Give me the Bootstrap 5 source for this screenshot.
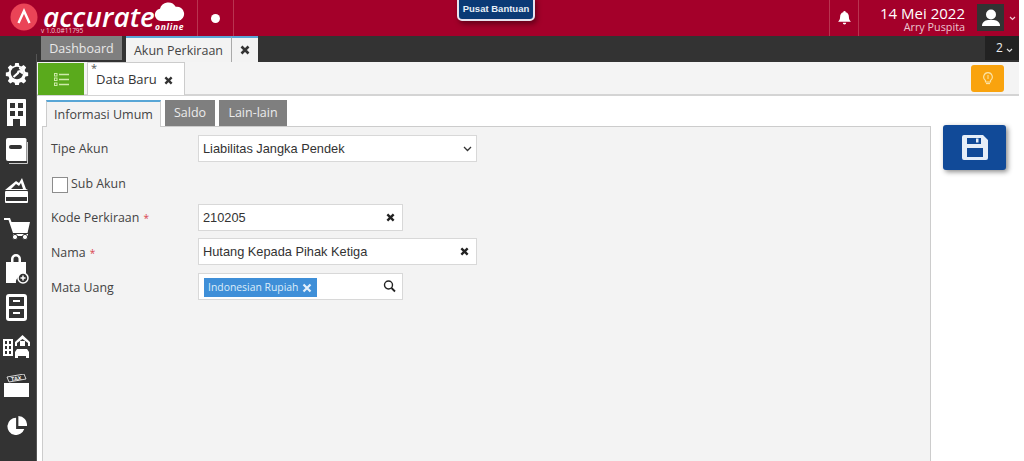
<!DOCTYPE html>
<html lang="id"><head><meta charset="utf-8"><title>Accurate</title>
<link href="https://cdn.jsdelivr.net/npm/bootstrap@5.3.0/dist/css/bootstrap.min.css" rel="stylesheet">
<style>
html,body{height:461px;overflow:hidden;background:#fff}
body{font-family:"Open Sans","Noto Sans",sans-serif;font-size:12.4px;color:#444}
.app{width:1019px;height:461px}
.topbar{height:36px;background:#a4002a;color:#fff}
.brand{width:197px;padding-left:10px}
.logo-mark{width:28px;height:28px;flex:none;margin-top:3px}
.brand-word{position:relative;width:155px;height:36px;margin-left:3px}
.word{position:absolute;left:2px;top:5px;font:italic 600 27.8px/22px "Open Sans",sans-serif;letter-spacing:.1px;color:#fff}
.ver{position:absolute;left:0;top:27px;font-size:6.5px;line-height:7px;color:#f3c6d0}
.onl{position:absolute;left:114px;top:22px;font:italic 700 8.5px/9px "Open Sans",sans-serif;letter-spacing:.7px}
.cloud{position:absolute;left:113px;top:2px;width:31px;height:20px}
.sep{width:37px;height:36px;border-left:1px solid #b93450;border-right:1px solid #b93450}
.dot{width:9px;height:9px;background:#fff;border-radius:50%}
.help-wrap{position:relative;flex:1}
.help{position:absolute;left:223px;top:-3px;width:78px;height:24px;background:#0b3a75;border:2px solid #e9e3ee;border-radius:0 0 5px 5px;color:#e9f0f8;font:700 9.5px/20px "Liberation Sans",sans-serif;text-align:center;box-shadow:2px 3px 5px rgba(60,0,15,.6)}
.bell-box{width:30px;height:36px;border-left:1px solid #b93450;border-right:1px solid #b93450}
.when{width:106px;text-align:right;margin-right:12px;font-family:"Open Sans",sans-serif}
.when-date{font-size:15px;line-height:14px;margin-top:6px;white-space:nowrap}
.when-name{font-size:10.8px;line-height:11px;color:#ecc5cf;margin-top:1px;white-space:nowrap}
.avatar{width:27px;height:27px;background:#333;margin-right:5px}
.caret-m{width:10px}
.tabstrip{height:26px;background:#333;padding-left:41px}
.mtab{height:26px;font-size:12.5px;padding:0 9px}
.mtab-off{background:#7f7f7f;color:#e9e9e9;width:81px;text-align:center;padding:0;height:24px;margin-right:4px;line-height:26px}
.mtab-on{background:#f3f3f3;color:#444;border-top:2px solid #58a6d6;width:105px;line-height:25px;padding:0;text-align:center}
.mtab-x{background:#f3f3f3;border-top:2px solid #58a6d6;width:27px;border-left:1px solid #aaa}
.count{width:34px;height:24px;background:#222;color:#eee;font-size:12px;line-height:23px;padding-left:11px}
.count-caret{margin:0 0 -4px 3px}
.lower{height:399px}
.rail{width:36px;background:#333;flex:none;border-right:1px solid #555;box-sizing:content-box;margin-top:-8.5px;position:relative}
.rail-ico{height:39.1px;padding-right:3px}
.rail-ico svg{display:block}
.main{min-width:0;background:#fff}
.subbar{height:34px;background:#f4f4f4;border-bottom:2px solid #d4d4d4}
.green{width:46px;height:32px;background:#5aaa1c;margin:1px 3px 0 1px}
.dtab{position:relative;width:98px;height:33px;background:#fff;border:1px solid #ccc;border-bottom:0;font-size:13px;line-height:33px;color:#333;padding-left:8px}
.dtab-star{position:absolute;left:3px;top:-3px;font-size:11px;line-height:16px;color:#555}
.bulb{width:33px;height:27px;background:#f9a30e;border-radius:3px;margin:3px 15px 0 0}
.pane{min-height:0;position:relative;padding:4px 0 0 5px}
.ftabs{height:27px;gap:4px;padding-left:4px}
.ftab{font-size:12.5px;line-height:26px;height:26px;text-align:center}
.ftab-on{width:115px;height:27px;background:#f3f3f3;border-top:2px solid #58a6d6;border-left:1px solid #ccc;border-right:1px solid #ccc;color:#444;position:relative;z-index:1}
.ftab-off{background:#7f7f7f;color:#ececec}
.w-saldo{width:50px}.w-lain{width:68px}
.panel-row{flex:1;min-height:0}
.panel{width:889px;background:#f3f3f3;border:1px solid #ccc;border-bottom:0;margin-top:-1px;padding-top:8px;height:336px}
.field{height:27px;padding-left:8px;color:#444;margin-bottom:7px}
.field-first{margin-bottom:0}
.field-last{margin-bottom:8px}
.lbl{width:147px;line-height:27px;font-size:12.4px}
.lbl-low{line-height:29px}
.req{color:#d9434e;font-size:10px;margin-left:1px}
.box{background:#fff;border:1px solid #d8d8d8;height:27px;font:12.8px/25px "Liberation Sans",sans-serif;color:#333;padding:0 7px 0 4px}
.w-l{width:279px}.w-s{width:205px}
.subk{height:30px;margin:12px 0 0;padding-left:9px;color:#444}
.chk{width:16px;height:16px;background:#fff;border:1px solid #8c8c8c;margin-top:3px;margin-right:3px}
.subk-t{line-height:19px;font-size:12.4px}
.chip{background:#3f8fd8;color:#dcecf9;height:19px;margin:4px 0 0 1px;padding:0 5px 0 4px;font:10.4px/19px "Open Sans",sans-serif;width:113px;white-space:nowrap}
.caret-r{margin-right:-3px}
.search-r{margin:5px -1px 0 0}
.savebtn{width:63px;height:45px;background:#114a98;border-radius:3px;margin:-2px 0 0 12px;box-shadow:2px 2px 5px rgba(0,0,0,.45)}
</style></head><body>
<div class="app d-flex flex-column">
 <div class="topbar d-flex flex-shrink-0">
  <div class="brand d-flex">
   <svg class="logo-mark" viewBox="0 0 28 28"><circle cx="14" cy="14" r="13.500" fill="#ea4457"/><path d="M8.500 20 14 8l5.500 12" fill="none" stroke="#fff" stroke-width="2.400"/></svg>
   <div class="brand-word">
    <span class="word">accurate</span>
    <span class="ver">v 1.0.0#11795</span>
    <svg class="cloud" viewBox="0 0 32 21"><path d="M7 20a6.500 6.500 0 0 1-1-12.900A9 9 0 0 1 22.500 5 7.500 7.500 0 0 1 25 20Z" fill="#fff"/></svg>
    <span class="onl">online</span>
   </div>
  </div>
  <div class="sep d-flex align-items-center justify-content-center"><span class="dot"></span></div>
  <div class="help-wrap"><div class="help">Pusat Bantuan</div></div>
  <div class="bell-box d-flex align-items-center justify-content-center">
   <svg width="13" height="14" viewBox="0 0 13 14"><path d="M6.500 0a1.200 1.200 0 0 1 1.200 1.300c2.200.5 3.200 2.300 3.200 4.700 0 2.500.8 3.500 2 4.800H.1c1.200-1.300 2-2.300 2-4.800 0-2.400 1-4.200 3.200-4.700A1.200 1.200 0 0 1 6.500 0ZM4.800 11.800h3.400a1.700 1.700 0 0 1-3.400 0Z" fill="#fff"/></svg>
  </div>
  <div class="when"><div class="when-date">14 Mei 2022</div><div class="when-name">Arry Puspita</div></div>
  <div class="avatar d-flex align-items-center justify-content-center mt-1">
   <svg width="20" height="18" viewBox="0 0 20 18"><circle cx="10" cy="5.500" r="5" fill="#fff"/><path d="M1 17c0-4 3-5.500 6-6h6c3 .5 6 2 6 6Z" fill="#fff"/></svg>
  </div>
  <div class="caret-m d-flex align-items-center"><svg width="7" height="5" viewBox="0 0 7 5"><path d="m1 1 2.500 2.500L6 1" fill="none" stroke="#f3c6d0" stroke-width="1.200"/></svg></div>
 </div>
 <div class="tabstrip d-flex flex-shrink-0">
  <div class="mtab mtab-off">Dashboard</div>
  <div class="mtab mtab-on">Akun Perkiraan</div>
  <div class="mtab-x d-flex align-items-center justify-content-center"><svg width="10" height="10" viewBox="0 0 10 10"><path d="m1.500 1.500 7 7m0-7-7 7" stroke="#333" stroke-width="2.600"/></svg></div>
  <div class="flex-grow-1"></div>
  <div class="count">2<svg class="count-caret" width="7" height="5" viewBox="0 0 7 5"><path d="m1 1 2.500 2.500L6 1" fill="none" stroke="#ddd" stroke-width="1.200"/></svg></div>
 </div>
 <div class="lower d-flex flex-grow-1">
  <div class="rail">
   <div class="rail-ico d-flex justify-content-center align-items-center"><svg width="24" height="24" viewBox="0 0 24 24"><path d="M10 1h4l.6 3 2.200.9 2.600-1.700 2.800 2.800-1.700 2.600.9 2.200 3 .6v4l-3 .6-.9 2.200 1.700 2.600-2.800 2.800-2.600-1.700-2.200.9-.6 3h-4l-.6-3-2.200-.9-2.600 1.700-2.800-2.800 1.700-2.600-.9-2.200-3-.6v-4l3-.6.9-2.200-1.700-2.600 2.800-2.800 2.600 1.700 2.200-.9Z" fill="#fff" transform="translate(1.200 1.200) scale(.9)"/><circle cx="12" cy="12" r="6.200" fill="#333"/><path d="M14 7a3.700 3.700 0 0 1 3 4.600l-2.100-1.500-1.500.5-.5 1.500L8.500 16" stroke="#fff" stroke-width="2.200" fill="none"/></svg></div>
   <div class="rail-ico d-flex justify-content-center align-items-center"><svg width="19" height="27" viewBox="0 0 19 27"><path fill-rule="evenodd" d="M1 0h17a1 1 0 0 1 1 1v26h-6v-7H6v7H0V1a1 1 0 0 1 1-1ZM3 4v5h5V4Zm8 0v5h5V4ZM3 12v5h5v-5Zm8 0v5h5v-5Z" fill="#fff"/></svg></div>
   <div class="rail-ico d-flex justify-content-center align-items-center"><svg width="22" height="26" viewBox="0 0 22 26"><path d="M2 0h17a1.500 1.500 0 0 1 1.500 1.500V23H2a2 2 0 0 1-2-2V2a2 2 0 0 1 2-2Z" fill="#fff"/><rect x="3" y="7" width="13" height="4" rx="2" fill="#333"/><path d="M21.500 4v21.500H3" fill="none" stroke="#ccc"/></svg></div>
   <div class="rail-ico d-flex justify-content-center align-items-center"><svg width="23" height="25" viewBox="0 0 23 25"><path d="M0 12 11 3l3 2 3-5 4 11 2 1H0Z" fill="#fff"/><path d="m6 11 5-5 3 2 2-3 2 6Z" fill="#333"/><rect y="13" width="23" height="12" fill="#fff" rx="1"/><rect x="1" y="19" width="21" height="4" fill="#333"/></svg></div>
   <div class="rail-ico d-flex justify-content-center align-items-center"><svg width="26" height="22" viewBox="0 0 26 22"><path d="M0 0h6l1.500 4H26l-2.500 11H9L4.500 2H0Z" fill="#fff"/><path d="M9 16h15v2H9Z" fill="#fff"/><circle cx="11" cy="19" r="2.600" fill="#fff" stroke="#333"/><circle cx="21" cy="19" r="2.600" fill="#fff" stroke="#333"/></svg></div>
   <div class="rail-ico d-flex justify-content-center align-items-center"><svg width="24" height="32" viewBox="0 0 24 32"><path d="M1 9h5V6a5 5 0 0 1 10 0v3h5v14h-3a6 6 0 0 0-7 7H1Z" fill="#fff"/><path d="M8.500 9V6a2.500 2.500 0 0 1 5 0v3Z" fill="#333"/><circle cx="18" cy="25" r="5" fill="#333" stroke="#fff" stroke-width="1.500"/><path d="M15.500 25h5M18 22.500v5" stroke="#fff" stroke-width="1.500"/></svg></div>
   <div class="rail-ico d-flex justify-content-center align-items-center"><svg width="21" height="27" viewBox="0 0 21 27"><rect width="21" height="27" rx="3" fill="#fff"/><rect x="3" y="3" width="15" height="9" fill="#333"/><rect x="3" y="15" width="15" height="9" fill="#333"/><rect x="7" y="6" width="7" height="2" fill="#fff"/><rect x="7" y="18" width="7" height="2" fill="#fff"/></svg></div>
   <div class="rail-ico d-flex justify-content-center align-items-center"><svg width="27" height="26" viewBox="0 0 27 26"><path fill-rule="evenodd" d="M0 5h10v17H0ZM2 7v3h2V7Zm4 0v3h2V7ZM2 12v3h2v-3Zm4 0v3h2v-3ZM2 17v3h2v-3Zm4 0v3h2v-3Z" fill="#fff"/><path d="m12 8 7.500-7L27 8v4h-2V9l-5.500-4L14 9v3h-2Z" fill="#fff"/><rect x="17" y="7" width="5" height="5" fill="#fff"/><path d="M14 15h10l2 3v6h-3v-2H15v2h-3v-6Z" fill="#fff"/></svg></div>
   <div class="rail-ico d-flex justify-content-center align-items-center"><svg width="25" height="23" viewBox="0 0 25 23"><path d="m3 3 17-3 2 5-17 3Z" fill="#333" stroke="#fff" stroke-width=".8"/><text x="7" y="6.500" font-family="Liberation Sans" font-size="5.500" font-weight="700" fill="#fff" transform="rotate(-8 12 5)">TAX</text><rect y="9" width="25" height="14" fill="#fff"/></svg></div>
   <div class="rail-ico d-flex justify-content-center align-items-center"><svg width="20" height="20" viewBox="0 0 22 22"><path d="M10 3a9.500 9.500 0 1 0 9 12.500h-9Z" fill="#fff"/><path d="M12.500 1v11H22A10 10 0 0 0 12.500 1Z" fill="#fff"/></svg></div>
  </div>
  <div class="main flex-grow-1 d-flex flex-column">
   <div class="subbar d-flex flex-shrink-0">
    <div class="green d-flex align-items-center justify-content-center"><svg width="15" height="13" viewBox="0 0 15 13"><path d="M5 1.500h10M5 6.500h10M5 11.500h10" stroke="#cdeaa9" stroke-width="1.500"/><rect x=".5" y=".5" width="2.500" height="2.500" fill="none" stroke="#cdeaa9"/><rect x=".5" y="5" width="2.500" height="2.500" fill="none" stroke="#cdeaa9"/><rect x=".5" y="10" width="2.500" height="2.500" fill="none" stroke="#cdeaa9"/></svg></div>
    <div class="dtab"><span class="dtab-star">*</span>Data Baru <svg class="ms-1" width="9" height="9" viewBox="0 0 10 10"><path d="m1.500 1.500 7 7m0-7-7 7" stroke="#333" stroke-width="2.600"/></svg></div>
    <div class="flex-grow-1"></div>
    <div class="bulb d-flex align-items-center justify-content-center"><svg width="10" height="13" viewBox="0 0 10 13"><path d="M5 .7a4.300 4.300 0 0 1 2.500 7.800V10h-5V8.500A4.300 4.300 0 0 1 5 .7Z" fill="none" stroke="#fbe3a5" stroke-width="1.200"/><path d="M3 11.500h4" stroke="#fbe3a5" stroke-width="1.300"/><path d="M5 3v4" stroke="#fbe3a5"/></svg></div>
   </div>
   <div class="pane flex-grow-1 d-flex flex-column">
    <div class="ftabs d-flex flex-shrink-0">
     <div class="ftab ftab-on">Informasi Umum</div>
     <div class="ftab ftab-off w-saldo">Saldo</div>
     <div class="ftab ftab-off w-lain">Lain-lain</div>
    </div>
    <div class="panel-row d-flex">
     <div class="panel flex-shrink-0">
      <div class="field field-first d-flex"><div class="lbl">Tipe Akun</div><div class="box w-l d-flex justify-content-between align-items-center">Liabilitas Jangka Pendek <svg class="caret-r" width="9" height="6" viewBox="0 0 9 6"><path d="m1 1 3.500 3.500L8 1" fill="none" stroke="#333" stroke-width="1.300"/></svg></div></div>
      <div class="subk d-flex"><span class="chk"></span><span class="subk-t">Sub Akun</span></div>
      <div class="field d-flex"><div class="lbl">Kode Perkiraan <span class="req">*</span></div><div class="box w-s d-flex justify-content-between align-items-center">210205 <svg width="9" height="9" viewBox="0 0 10 10"><path d="m1.500 1.500 7 7m0-7-7 7" stroke="#222" stroke-width="2.600"/></svg></div></div>
      <div class="field field-last d-flex"><div class="lbl lbl-low">Nama <span class="req">*</span></div><div class="box w-l d-flex justify-content-between align-items-center">Hutang Kepada Pihak Ketiga <svg width="9" height="9" viewBox="0 0 10 10"><path d="m1.500 1.500 7 7m0-7-7 7" stroke="#222" stroke-width="2.600"/></svg></div></div>
      <div class="field d-flex"><div class="lbl lbl-low">Mata Uang</div><div class="box w-s d-flex justify-content-between"><div class="chip d-flex justify-content-between align-items-center">Indonesian Rupiah <svg width="10" height="10" viewBox="0 0 10 10"><path d="m1.500 1.500 7 7m0-7-7 7" stroke="#e4f0fb" stroke-width="2.200"/></svg></div><svg class="search-r" width="13" height="14" viewBox="0 0 13 14"><circle cx="5.500" cy="6" r="4" fill="none" stroke="#222" stroke-width="1.400"/><path d="m8.500 9 3.500 3.500" stroke="#222" stroke-width="1.800"/></svg></div></div>
     </div>
     <div class="savebtn d-flex align-items-center justify-content-center"><svg width="26" height="25" viewBox="0 0 26 25"><path fill-rule="evenodd" d="M2 0h19l5 5v18a2 2 0 0 1-2 2H2a2 2 0 0 1-2-2V2a2 2 0 0 1 2-2Zm3 3v6h14V3ZM5 13v9h16v-9Z" fill="#e6eef8"/><rect x="14" y="3.500" width="2.500" height="4" fill="#e6eef8"/></svg></div>
    </div>
   </div>
  </div>
 </div>
</div>
<script src="https://cdn.jsdelivr.net/npm/bootstrap@5.3.0/dist/js/bootstrap.bundle.min.js"></script>
</body></html>
